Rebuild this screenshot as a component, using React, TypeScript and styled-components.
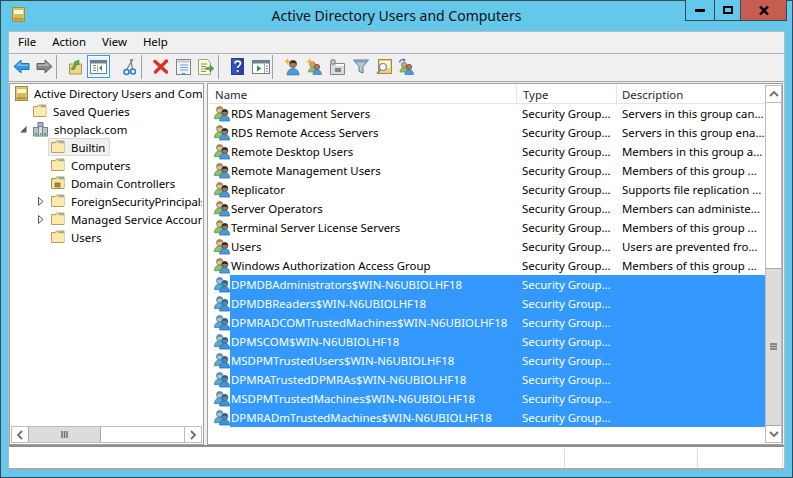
import React from 'react';
import styled, { createGlobalStyle } from 'styled-components';

const GlobalStyle = createGlobalStyle`
  html, body {
    margin: 0;
    padding: 0;
    background: #63c8ea;
    overflow: hidden;
  }
  * {
    box-sizing: border-box;
  }
`;

const Win = styled.div`
  width: 793px;
  height: 478px;
  background: #63c8ea;
  border: 1px solid #3c4850;
  display: flex;
  flex-direction: column;
  font-family: 'Noto Sans', 'Liberation Sans', sans-serif;
  font-size: 11.4px;
  color: #000;
`;

const TitleBar = styled.div`
  height: 30px;
  flex: none;
  display: grid;
  grid-template-columns: 1fr auto 1fr;
`;

const TitleIcon = styled.div`
  padding: 6px 0 0 11px;
`;

const Title = styled.div`
  font-size: 14px;
  line-height: 29px;
  color: #111;
  white-space: nowrap;
`;

const Controls = styled.div`
  justify-self: end;
  display: flex;
  height: 21px;
  margin-right: 5px;
  margin-top: -1px;
  border: 1px solid #3c4850;
  border-top: 0;
`;

const CtlButton = styled.div<{ $w: number; $close?: boolean }>`
  width: ${(p) => p.$w}px;
  display: flex;
  align-items: center;
  justify-content: center;
  background: ${(p) => (p.$close ? '#c75c50' : '#63c8ea')};
  & + & {
    border-left: 1px solid #3c4850;
  }
`;

const Client = styled.div`
  flex: 1;
  margin: 0 7px 7px 7px;
  background: #f0f0f0;
  border: 1px solid #b4bcc4;
  border-width: 1px 1px 2px 1px;
  border-bottom-color: #a8a8a8;
  display: flex;
  flex-direction: column;
  min-height: 0;
`;

const MenuBar = styled.div`
  height: 22px;
  flex: none;
  display: flex;
  padding: 0 0 2px 9px;
  gap: 16px;
  align-items: center;
  border-bottom: 1px solid #b0b0b8;
`;

const MenuItem = styled.span`
  line-height: 19px;
`;

const ToolBar = styled.div`
  height: 28px;
  flex: none;
  display: flex;
  align-items: flex-start;
  padding: 1px 0 0 1px;
  border-bottom: 1px solid #a8a8a8;
`;

const ToolButton = styled.div<{ $active?: boolean }>`
  width: 23px;
  height: 23px;
  flex: none;
  display: flex;
  align-items: center;
  justify-content: center;
  ${(p) => p.$active && 'background: #e5f3fb; border: 1px solid #3399ff; box-shadow: inset 0 0 0 1px #fff;'}
`;

const ToolSep = styled.div<{ $blank?: boolean }>`
  width: 8px;
  flex: none;
  height: 24px;
  border-left: 1px solid ${(p) => (p.$blank ? 'transparent' : '#a0a0a0')};
`;

const Panes = styled.div`
  flex: 1;
  min-height: 0;
  display: flex;
  gap: 3px;
  padding: 1px 1px 0 0;
  border-bottom: 2px solid #8e8e8e;
`;

const TreePane = styled.div`
  width: 195px;
  flex: none;
  background: #fff;
  border: 1px solid #a0a0a0;
  display: flex;
  flex-direction: column;
  padding: 0 1px 1px;
`;

const TreeList = styled.div`
  flex: 1;
  overflow: hidden;
`;

const TreeRow = styled.div<{ $level: number }>`
  height: 18px;
  display: flex;
  align-items: center;
  padding-left: ${(p) => 1 + p.$level * 18}px;
  white-space: nowrap;
`;

const Expander = styled.span`
  width: 12px;
  flex: none;
  margin-left: -13px;
  margin-right: 1px;
  display: flex;
  justify-content: center;
`;

const TreeLabel = styled.span<{ $selected?: boolean }>`
  display: flex;
  align-items: center;
  gap: 6px;
  height: 18px;
  padding: 0 4px 0 2px;
  border: 1px solid ${(p) => (p.$selected ? '#d9d9d9' : 'transparent')};
  background: ${(p) => (p.$selected ? '#f0f0f0' : 'transparent')};
`;

const HScroll = styled.div`
  height: 17px;
  flex: none;
  display: flex;
  border: 1px solid #bdbdbd;
`;

const ScrollBtn = styled.div`
  width: 16px;
  flex: none;
  display: flex;
  align-items: center;
  justify-content: center;
  background: #fff;
`;

const HThumb = styled.div`
  width: 73px;
  flex: none;
  display: flex;
  align-items: center;
  justify-content: center;
  background: #dcdcdc;
  border: 1px solid #a8a8a8;
  border-width: 0 1px;
`;

const HTrack = styled.div`
  flex: 1;
  background: #fff;
  border-right: 1px solid #bdbdbd;
`;

const ListPane = styled.div`
  flex: 1;
  min-width: 0;
  background: #fff;
  border: 1px solid #a0a0a0;
  padding: 1px 0 1px 1px;
  display: flex;
`;

const ListBody = styled.div`
  flex: 1;
  min-width: 0;
  overflow: hidden;
`;

const HeaderRow = styled.div`
  height: 19px;
  display: grid;
  grid-template-columns: 308px 100px 1fr;
  border-bottom: 1px solid #e5e5e5;
`;

const HeaderCell = styled.div`
  padding-left: 6px;
  line-height: 20px;
  border-right: 1px solid #e5e5e5;
  color: #1e1e3c;
  &:last-child {
    border-right: 0;
    padding-left: 5px;
  }
`;

const Row = styled.div`
  height: 19px;
  display: grid;
  grid-template-columns: 308px 100px 1fr;
  line-height: 19px;
`;

const NameCell = styled.div`
  display: flex;
  align-items: center;
  min-width: 0;
  padding-left: 5px;
`;

const IconSlot = styled.span`
  width: 16px;
  height: 17px;
  flex: none;
  display: flex;
`;

const CellText = styled.div<{ $selected?: boolean }>`
  overflow: hidden;
  white-space: nowrap;
  color: ${(p) => (p.$selected ? '#fff' : '#000')};
  background: ${(p) => (p.$selected ? '#3399ff' : 'transparent')};
  height: 19px;
  padding-left: 5px;
`;

const NameText = styled(CellText)`
  flex: 1;
  padding-left: 1px;
`;

const VScroll = styled.div`
  width: 17px;
  flex: none;
  display: flex;
  flex-direction: column;
  border: 1px solid #bdbdbd;
`;

const VBtn = styled.div`
  height: 16px;
  flex: none;
  display: flex;
  align-items: center;
  justify-content: center;
  background: #fff;
`;

const VTrack = styled.div`
  flex: 1;
  background: #fff;
  border-top: 1px solid #bdbdbd;
  display: flex;
  flex-direction: column;
  justify-content: flex-end;
`;

const VThumb = styled.div`
  height: 158px;
  background: #dcdcdc;
  border: 1px solid #a8a8a8;
  border-width: 1px 0;
  display: flex;
  align-items: center;
  justify-content: center;
`;

const StatusBar = styled.div`
  height: 21px;
  flex: none;
  background: #fff;
  display: grid;
  grid-template-columns: 556px 133px 85px 1fr;
  padding-top: 2px;
`;

const StatusCell = styled.div`
  border-right: 1px solid #dcdcdc;
  &:last-child {
    border-right: 0;
  }
`;

/* drawings */

const FolderIcon = () => (
  <svg width="14" height="14" viewBox="0 0 14 14">
    <path d="M.5 2.5h4l1-1.5h7.5v11.5H.5z" fill="#f7dd8e" stroke="#b9a062" />
    <rect x="1" y="4" width="12" height="8" fill="#fbe9ae" />
    <rect x="8" y="1.5" width="4" height="1.5" fill="#5ea9d8" />
  </svg>
);

const OuFolderIcon = () => (
  <svg width="14" height="14" viewBox="0 0 14 14">
    <path d="M.5 2.5h4l1-1.5h7.5v11.5H.5z" fill="#f3d88c" stroke="#a89058" />
    <rect x="1" y="4" width="12" height="8" fill="#f8e4a6" />
    <rect x="8" y="1.5" width="4" height="1.5" fill="#5ea9d8" />
    <rect x="4" y="7" width="5" height="4" fill="#b08a2a" stroke="#6e5a20" strokeWidth=".6" />
  </svg>
);

const ConsoleIcon = () => (
  <svg width="13" height="15" viewBox="0 0 13 15">
    <rect x=".5" y=".5" width="12" height="14" fill="#e8d182" stroke="#a58d3e" />
    <rect x="1.5" y="1.5" width="10" height="12" fill="#d8bb5c" />
    <rect x="2" y="3" width="9" height="4" fill="#fdf6d5" />
    <rect x="1.5" y="11" width="10" height="2.5" fill="#b9983c" />
  </svg>
);

const DomainIcon = () => (
  <svg width="15" height="15" viewBox="0 0 15 15">
    <rect x="5" y=".5" width="5" height="4" fill="#a9b7c0" stroke="#6e7d88" />
    <rect x=".5" y="5.5" width="5" height="8.5" fill="#b8c4cc" stroke="#75838c" />
    <rect x="9.5" y="5.5" width="5" height="8.5" fill="#b8c4cc" stroke="#75838c" />
    <rect x="5.5" y="4.5" width="4" height="9.5" fill="#d6dee3" stroke="#75838c" />
    <rect x="2" y="11" width="2" height="2" fill="#3fb44a" />
    <rect x="11" y="11" width="2" height="2" fill="#3fb44a" />
    <rect x="7" y="11" width="1.5" height="2" fill="#3fb44a" />
  </svg>
);

const GroupIcon = ({ selected }: { selected?: boolean }) => (
  <svg width="17" height="17" viewBox="0 0 17 17">
    <circle cx="6" cy="4.500" r="3.400" fill={selected ? '#9fc3d8' : '#dcc09c'} stroke={selected ? '#4a7ea8' : '#9a7c54'} strokeWidth=".8" />
    <path d="M2.600 4.500C2.600 2 4 1 6 1s3.400 1 3.400 3C7.500 3 5 3.200 2.600 4.500z" fill={selected ? '#5f8fb0' : '#a58654'} />
    <path d="M.5 14c0-4 2.300-6 5.500-6s5.500 2 5.500 6z" fill={selected ? '#5fa6c8' : '#8fc06c'} stroke={selected ? '#3a7ea8' : '#5e8c42'} strokeWidth=".8" />
    <circle cx="11.500" cy="7.500" r="3.200" fill={selected ? '#5d86a8' : '#a0785a'} stroke={selected ? '#2e5c86' : '#3e322a'} strokeWidth=".8" />
    <path d="M8.300 7.200c0-2.400 1.400-3 3.200-3s3.200.6 3.200 3c-2-.9-4.400-.9-6.400 0z" fill={selected ? '#30608c' : '#2f2c2a'} />
    <path d="M6 16.500c0-3.700 2.300-6 5.500-6s5 2.300 5 6z" fill={selected ? '#3f92dc' : '#4d9ad8'} stroke={selected ? '#1f68b0' : '#2c6ea8'} strokeWidth=".8" />
  </svg>
);

const ArrowIcon = ({ color, edge, flip }: { color: string; edge: string; flip?: boolean }) => (
  <svg width="17" height="15" viewBox="0 0 17 15" style={flip ? { transform: 'scaleX(-1)' } : undefined}>
    <path d="M1 7.500 8 1v3.500h8v6H8V14z" fill={color} stroke={edge} />
    <path d="M3 7 8 3v2.500h7V7z" fill="#fff" opacity=".35" />
  </svg>
);

const UpFolderIcon = () => (
  <svg width="16" height="16" viewBox="0 0 16 16">
    <path d="M1.500 5h12v10h-12z" fill="#f2d488" stroke="#a89058" />
    <path d="M3 10 7 5 6 3l5 -2v5L9 5 6 11z" fill="#5cab3c" stroke="#38802a" strokeWidth=".5" />
  </svg>
);

const PaneIcon = () => (
  <svg width="17" height="14" viewBox="0 0 17 14">
    <rect x=".5" y=".5" width="16" height="13" fill="#fff" stroke="#6f7f8c" />
    <rect x="1" y="1" width="15" height="2.500" fill="#6f7f8c" />
    <path d="M3 5.500h3M3 8h3M3 10.500h3" stroke="#6f7f8c" />
    <path d="M7.500 5.500v7" stroke="#9aa8b2" />
    <path d="M12 5v6L9 8z" fill="#2f9e44" />
  </svg>
);

const ScissorsIcon = () => (
  <svg width="13" height="18" viewBox="0 0 13 18">
    <path d="M10 1 4 11M7.500 1l2 10" stroke="#6f7880" strokeWidth="1.200" fill="none" />
    <circle cx="3.500" cy="14" r="2.500" fill="none" stroke="#2d7fd3" strokeWidth="1.600" />
    <circle cx="10" cy="13.500" r="2.500" fill="none" stroke="#2d7fd3" strokeWidth="1.600" />
  </svg>
);

const DeleteIcon = () => (
  <svg width="16" height="15" viewBox="0 0 16 15">
    <path d="M2 2.500 13.500 13M13.500 2 2.500 13" stroke="#d8302a" strokeWidth="3.400" strokeLinecap="round" />
  </svg>
);

const PropsIcon = () => (
  <svg width="15" height="16" viewBox="0 0 15 16">
    <rect x=".5" y=".5" width="14" height="15" fill="#f2f2f2" stroke="#7b8288" />
    <rect x="1.500" y="1.500" width="12" height="2" fill="#c3c8cc" />
    <path d="M4 6h8M4 8.500h8M4 11h8" stroke="#6aa8d8" />
    <rect x="6" y="14" width="3" height="2" fill="#31a0e0" />
  </svg>
);

const ExportIcon = () => (
  <svg width="17" height="16" viewBox="0 0 17 16">
    <path d="M.5.500h9l3 3v12H.5z" fill="#fdf8dc" stroke="#a8a080" />
    <path d="M3 5h6M3 7.500h5M3 10h5M3 12.500h5" stroke="#8c8c78" />
    <path d="M8 8.500h4V6l4 3.500-4 3.500v-2.500H8z" fill="#46b04a" stroke="#2c8030" strokeWidth=".5" />
  </svg>
);

const HelpIcon = () => (
  <svg width="13" height="17" viewBox="0 0 13 17">
    <rect width="13" height="17" fill="#2a3f9f" />
    <rect x="1" y="1" width="5" height="15" fill="#3552bd" />
    <path d="M4 5.500c0-3.200 5.500-3.200 5.500 0 0 2-2.800 2.200-2.800 4.500M6.700 12v2.200" stroke="#fff" strokeWidth="1.700" fill="none" />
  </svg>
);

const RunIcon = () => (
  <svg width="18" height="14" viewBox="0 0 18 14">
    <rect x=".5" y=".5" width="17" height="13" fill="#fff" stroke="#6f7f8c" />
    <rect x="1" y="1" width="16" height="2.500" fill="#6f7f8c" />
    <path d="M12.500 4v9" stroke="#9aa8b2" />
    <path d="M14 6h2M14 8.500h2M14 11h2" stroke="#6f7f8c" />
    <path d="M5 5.500v6l4.500-3z" fill="#2f9e44" />
  </svg>
);

const Spark = ({ x, y }: { x: number; y: number }) => (
  <path
    d={`M${x} ${y - 3.5}l1 2.500 2.500 1-2.500 1-1 2.500-1-2.500-2.500-1 2.500-1z`}
    fill="#f5b324"
  />
);

const NewUserIcon = () => (
  <svg width="16" height="18" viewBox="0 0 16 18">
    <circle cx="9" cy="6" r="3.600" fill="#a87c58" stroke="#4a3a2a" strokeWidth=".6" />
    <path d="M5.500 5.500c0-2.500 1.500-3 3.500-3s3.500.5 3.500 3c-2-.8-5-.8-7 0z" fill="#33302c" />
    <path d="M3 17c0-4 2.500-6.500 6-6.500s6 2.500 6 6.500z" fill="#4d9ad8" stroke="#2c6ea8" strokeWidth=".6" />
    <Spark x={3.5} y={3.5} />
  </svg>
);

const NewGroupIcon = () => (
  <svg width="17" height="17" viewBox="0 0 17 17">
    <circle cx="6.500" cy="6.500" r="2.800" fill="#c9a078" stroke="#8a6a44" strokeWidth=".6" />
    <path d="M2.500 14c0-3 1.700-4.500 4-4.500s4 1.500 4 4.500z" fill="#8cc266" stroke="#5a8a3c" strokeWidth=".6" />
    <circle cx="11" cy="9" r="2.700" fill="#a87c58" stroke="#4a3a2a" strokeWidth=".6" />
    <path d="M7 16.500c0-3 1.600-4.800 4-4.800s4.500 1.800 4.500 4.800z" fill="#4d9ad8" stroke="#2c6ea8" strokeWidth=".6" />
    <Spark x={3.5} y={3.5} />
  </svg>
);

const NewOuIcon = () => (
  <svg width="17" height="17" viewBox="0 0 17 17">
    <path d="M1.500 5.500h14v11h-14z" fill="#d9dcde" stroke="#80868a" />
    <rect x="7" y="6" width="8" height="2" fill="#fff" />
    <rect x="6" y="10" width="6" height="4" fill="#80868a" />
    <circle cx="4" cy="4" r="3" fill="#9a9ea2" />
    <circle cx="4" cy="4" r="1" fill="#e8e8e8" />
  </svg>
);

const FilterIcon = () => (
  <svg width="16" height="15" viewBox="0 0 16 15">
    <path d="M.5 1h15L10 7.500V14l-4-1.500v-5z" fill="#b9c9d4" stroke="#667a88" />
    <path d="M1.500 1.500h13l-1.500 2H3z" fill="#6fa6c8" />
  </svg>
);

const FindIcon = () => (
  <svg width="16" height="16" viewBox="0 0 16 16">
    <rect x="2.500" y=".5" width="13" height="14" fill="#e8d182" stroke="#a58d3e" />
    <rect x="4" y="2" width="10" height="7" fill="#fdf6d5" />
    <circle cx="7" cy="8" r="3.500" fill="#f2f6f8" stroke="#7c8a94" strokeWidth="1.200" />
    <path d="M4.500 10.500 1 14.500" stroke="#7c8a94" strokeWidth="1.700" />
  </svg>
);

const MoveIcon = () => (
  <svg width="17" height="17" viewBox="0 0 17 17">
    <path d="M1.500 4.500C2 2 4 1 6.500 2" stroke="#2d7fd3" strokeWidth="1.300" fill="none" />
    <path d="M5 .2 8 2 5.500 4z" fill="#2d7fd3" />
    <circle cx="6" cy="7" r="2.700" fill="#c9a078" stroke="#8a6a44" strokeWidth=".6" />
    <path d="M2 14c0-3 1.700-4.500 4-4.500s4 1.500 4 4.500z" fill="#8cc266" stroke="#5a8a3c" strokeWidth=".6" />
    <circle cx="11" cy="9" r="2.700" fill="#a87c58" stroke="#4a3a2a" strokeWidth=".6" />
    <path d="M7 16.500c0-3 1.600-4.800 4-4.800s4.500 1.800 4.500 4.800z" fill="#4d9ad8" stroke="#2c6ea8" strokeWidth=".6" />
  </svg>
);

const TreeArrowOpen = () => (
  <svg width="7" height="7" viewBox="0 0 7 7">
    <path d="M6.500 0v6.500H0z" fill="#595959" />
  </svg>
);

const TreeArrowClosed = () => (
  <svg width="6" height="9" viewBox="0 0 6 9">
    <path d="M.5.500 5 4.500.5 8.500z" fill="#fff" stroke="#595959" />
  </svg>
);

const Chevron = ({ dir }: { dir: 'left' | 'right' | 'up' | 'down' }) => {
  const rotate = { left: 0, up: 90, right: 180, down: 270 }[dir];
  return (
    <svg width="8" height="10" viewBox="0 0 8 10" style={{ transform: `rotate(${rotate}deg)` }}>
      <path d="M6 1 2 5l4 4" stroke="#6e6e6e" strokeWidth="1.800" fill="none" />
    </svg>
  );
};

const GripV = () => (
  <svg width="7" height="8" viewBox="0 0 7 8">
    <path d="M1 0v7M3.500 0v7M6 0v7" stroke="#6e6e6e" strokeWidth="1.500" />
  </svg>
);

const GripH = () => (
  <svg width="8" height="8" viewBox="0 0 8 8">
    <path d="M0 1h7M0 3.500h7M0 6h7" stroke="#6e6e6e" strokeWidth="1.500" />
  </svg>
);

const SEC = 'Security Group...';

const rows: { name: string; desc: string; selected?: boolean }[] = [
  { name: 'RDS Management Servers', desc: 'Servers in this group can...' },
  { name: 'RDS Remote Access Servers', desc: 'Servers in this group ena...' },
  { name: 'Remote Desktop Users', desc: 'Members in this group a...' },
  { name: 'Remote Management Users', desc: 'Members of this group ...' },
  { name: 'Replicator', desc: 'Supports file replication ...' },
  { name: 'Server Operators', desc: 'Members can administe...' },
  { name: 'Terminal Server License Servers', desc: 'Members of this group ...' },
  { name: 'Users', desc: 'Users are prevented fro...' },
  { name: 'Windows Authorization Access Group', desc: 'Members of this group ...' },
  { name: 'DPMDBAdministrators$WIN-N6UBIOLHF18', desc: '', selected: true },
  { name: 'DPMDBReaders$WIN-N6UBIOLHF18', desc: '', selected: true },
  { name: 'DPMRADCOMTrustedMachines$WIN-N6UBIOLHF18', desc: '', selected: true },
  { name: 'DPMSCOM$WIN-N6UBIOLHF18', desc: '', selected: true },
  { name: 'MSDPMTrustedUsers$WIN-N6UBIOLHF18', desc: '', selected: true },
  { name: 'DPMRATrustedDPMRAs$WIN-N6UBIOLHF18', desc: '', selected: true },
  { name: 'MSDPMTrustedMachines$WIN-N6UBIOLHF18', desc: '', selected: true },
  { name: 'DPMRADmTrustedMachines$WIN-N6UBIOLHF18', desc: '', selected: true },
];

const App: React.FC = () => (
  <>
    <GlobalStyle />
    <Win>
      <TitleBar>
        <TitleIcon>
          <ConsoleIcon />
        </TitleIcon>
        <Title>Active Directory Users and Computers</Title>
        <Controls>
          <CtlButton $w={28}>
            <svg width="10" height="3" viewBox="0 0 10 3">
              <rect width="10" height="3" fill="#000" />
            </svg>
          </CtlButton>
          <CtlButton $w={26}>
            <svg width="10" height="8" viewBox="0 0 10 8">
              <path d="M1 1h8v6H1z" fill="none" stroke="#000" strokeWidth="2" />
            </svg>
          </CtlButton>
          <CtlButton $w={46} $close>
            <svg width="10" height="9" viewBox="0 0 10 9">
              <path d="M1 .5 9 8.500M9 .5 1 8.500" stroke="#000" strokeWidth="2.400" />
            </svg>
          </CtlButton>
        </Controls>
      </TitleBar>
      <Client>
        <MenuBar>
          <MenuItem>File</MenuItem>
          <MenuItem>Action</MenuItem>
          <MenuItem>View</MenuItem>
          <MenuItem>Help</MenuItem>
        </MenuBar>
        <ToolBar>
          <ToolButton><ArrowIcon color="#2f9be8" edge="#1d6fb8" /></ToolButton>
          <ToolButton><ArrowIcon color="#8a8a8a" edge="#606060" flip /></ToolButton>
          <ToolSep />
          <ToolButton><UpFolderIcon /></ToolButton>
          <ToolButton $active><PaneIcon /></ToolButton>
          <ToolSep $blank />
          <ToolButton><ScissorsIcon /></ToolButton>
          <ToolSep />
          <ToolButton><DeleteIcon /></ToolButton>
          <ToolButton><PropsIcon /></ToolButton>
          <ToolButton><ExportIcon /></ToolButton>
          <ToolSep />
          <ToolButton><HelpIcon /></ToolButton>
          <ToolButton><RunIcon /></ToolButton>
          <ToolSep />
          <ToolButton><NewUserIcon /></ToolButton>
          <ToolButton><NewGroupIcon /></ToolButton>
          <ToolButton><NewOuIcon /></ToolButton>
          <ToolButton><FilterIcon /></ToolButton>
          <ToolButton><FindIcon /></ToolButton>
          <ToolButton><MoveIcon /></ToolButton>
        </ToolBar>
        <Panes>
          <TreePane>
            <TreeList>
              <TreeRow $level={0}>
                <TreeLabel><ConsoleIcon /> Active Directory Users and Computers</TreeLabel>
              </TreeRow>
              <TreeRow $level={1}>
                <TreeLabel><FolderIcon /> Saved Queries</TreeLabel>
              </TreeRow>
              <TreeRow $level={1}>
                <Expander><TreeArrowOpen /></Expander>
                <TreeLabel><DomainIcon /> shoplack.com</TreeLabel>
              </TreeRow>
              <TreeRow $level={2}>
                <TreeLabel $selected><FolderIcon /> Builtin</TreeLabel>
              </TreeRow>
              <TreeRow $level={2}>
                <TreeLabel><FolderIcon /> Computers</TreeLabel>
              </TreeRow>
              <TreeRow $level={2}>
                <TreeLabel><OuFolderIcon /> Domain Controllers</TreeLabel>
              </TreeRow>
              <TreeRow $level={2}>
                <Expander><TreeArrowClosed /></Expander>
                <TreeLabel><FolderIcon /> ForeignSecurityPrincipals</TreeLabel>
              </TreeRow>
              <TreeRow $level={2}>
                <Expander><TreeArrowClosed /></Expander>
                <TreeLabel><FolderIcon /> Managed Service Accounts</TreeLabel>
              </TreeRow>
              <TreeRow $level={2}>
                <TreeLabel><FolderIcon /> Users</TreeLabel>
              </TreeRow>
            </TreeList>
            <HScroll>
              <ScrollBtn><Chevron dir="left" /></ScrollBtn>
              <HThumb><GripV /></HThumb>
              <HTrack />
              <ScrollBtn><Chevron dir="right" /></ScrollBtn>
            </HScroll>
          </TreePane>
          <ListPane>
            <ListBody>
              <HeaderRow>
                <HeaderCell>Name</HeaderCell>
                <HeaderCell>Type</HeaderCell>
                <HeaderCell>Description</HeaderCell>
              </HeaderRow>
              {rows.map((r) => (
                <Row key={r.name}>
                  <NameCell>
                    <IconSlot><GroupIcon selected={r.selected} /></IconSlot>
                    <NameText $selected={r.selected}>{r.name}</NameText>
                  </NameCell>
                  <CellText $selected={r.selected}>{SEC}</CellText>
                  <CellText $selected={r.selected}>{r.desc}</CellText>
                </Row>
              ))}
            </ListBody>
            <VScroll>
              <VBtn><Chevron dir="up" /></VBtn>
              <VTrack>
                <VThumb><GripH /></VThumb>
              </VTrack>
              <VBtn><Chevron dir="down" /></VBtn>
            </VScroll>
          </ListPane>
        </Panes>
        <StatusBar>
          <StatusCell />
          <StatusCell />
          <StatusCell />
          <StatusCell />
        </StatusBar>
      </Client>
    </Win>
  </>
);

export default App;
